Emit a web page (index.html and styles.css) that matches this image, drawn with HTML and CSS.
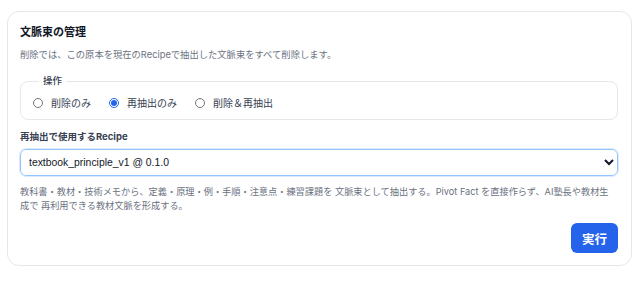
FILE: index.html
```html
<!DOCTYPE html>
<html lang="ja">
<head>
    <meta charset="UTF-8">
    <title>文脈束の管理</title>
    <link rel="stylesheet" href="styles.css">
</head>
<body>

<div class="card">
    <h3 class="title">文脈束の管理</h3>
    <p class="desc">削除では、この原本を現在のRecipeで抽出した文脈束をすべて削除します。</p>

    <fieldset class="ops">
        <legend>操作</legend>
        <label class="radio"><input type="radio" name="op" value="delete"> 削除のみ</label>
        <label class="radio"><input type="radio" name="op" value="reextract" checked> 再抽出のみ</label>
        <label class="radio"><input type="radio" name="op" value="both"> 削除＆再抽出</label>
    </fieldset>

    <label class="field-label" for="recipe">再抽出で使用するRecipe</label>
    <select id="recipe" class="select">
        <option>textbook_principle_v1 @ 0.1.0</option>
    </select>

    <p class="help">教科書・教材・技術メモから、定義・原理・例・手順・注意点・練習課題を 文脈束として抽出する。Pivot Fact を直接作らず、AI塾長や教材生成で 再利用できる教材文脈を形成する。</p>

    <div class="actions">
        <button class="btn-run" type="button">実行</button>
    </div>
</div>

</body>
</html>
```

FILE: styles.css
```css
body {
    margin: 11px 8px 0 7px;
    background-color: #ffffff;
    font-family: Inter, "Noto Sans CJK JP", sans-serif;
    color: #111827;
}
.card {
    border: 1px solid #e5e7eb;
    border-radius: 12px;
    padding: 12px 13px 12px 12px;
}
.title {
    margin: 0;
    font-size: 11px;
    font-weight: 700;
    line-height: 16px;
}
.desc {
    margin: 8px 0 0;
    font-size: 9.3px;
    line-height: 14px;
    color: #6b7280;
}
.ops {
    margin: 12px 0 0;
    padding: 8px 12px 9px;
    border: 1px solid #e5e7eb;
    border-radius: 8px;
    display: flex;
    gap: 18px;
    align-items: center;
}
.ops legend {
    padding: 0 4px;
    margin-left: 6px;
    font-size: 9.5px;
    font-weight: 500;
    line-height: 14px;
    color: #374151;
}
.radio {
    display: flex;
    align-items: center;
    gap: 8px;
    font-size: 10px;
    line-height: 14px;
    color: #374151;
}
.radio input {
    margin: 0;
    width: 10px;
    height: 10px;
    accent-color: #2563eb;
}
.field-label {
    display: block;
    margin-top: 10px;
    font-size: 9.5px;
    font-weight: 700;
    line-height: 14px;
    color: #374151;
}
.select {
    display: block;
    width: 100%;
    margin-top: 5px;
    height: 27px;
    padding: 0 4px 0 4px;
    border: 1px solid #93c5fd;
    border-radius: 6px;
    background-color: #ffffff;
    font-family: "Liberation Sans", Arial, sans-serif;
    font-size: 10.4px;
    color: #111827;
    outline: 1px solid #dbeafe;
}
.help {
    margin: 9px 0 0;
    padding-right: 6px;
    font-size: 9.2px;
    line-height: 14px;
    color: #6b7280;
}
.actions {
    display: flex;
    justify-content: flex-end;
    margin-top: 10px;
}
.btn-run {
    width: 47px;
    height: 30px;
    border: none;
    border-radius: 6px;
    background-color: #2563eb;
    color: #ffffff;
    font-family: inherit;
    font-size: 12.5px;
    font-weight: 700;
}
```
